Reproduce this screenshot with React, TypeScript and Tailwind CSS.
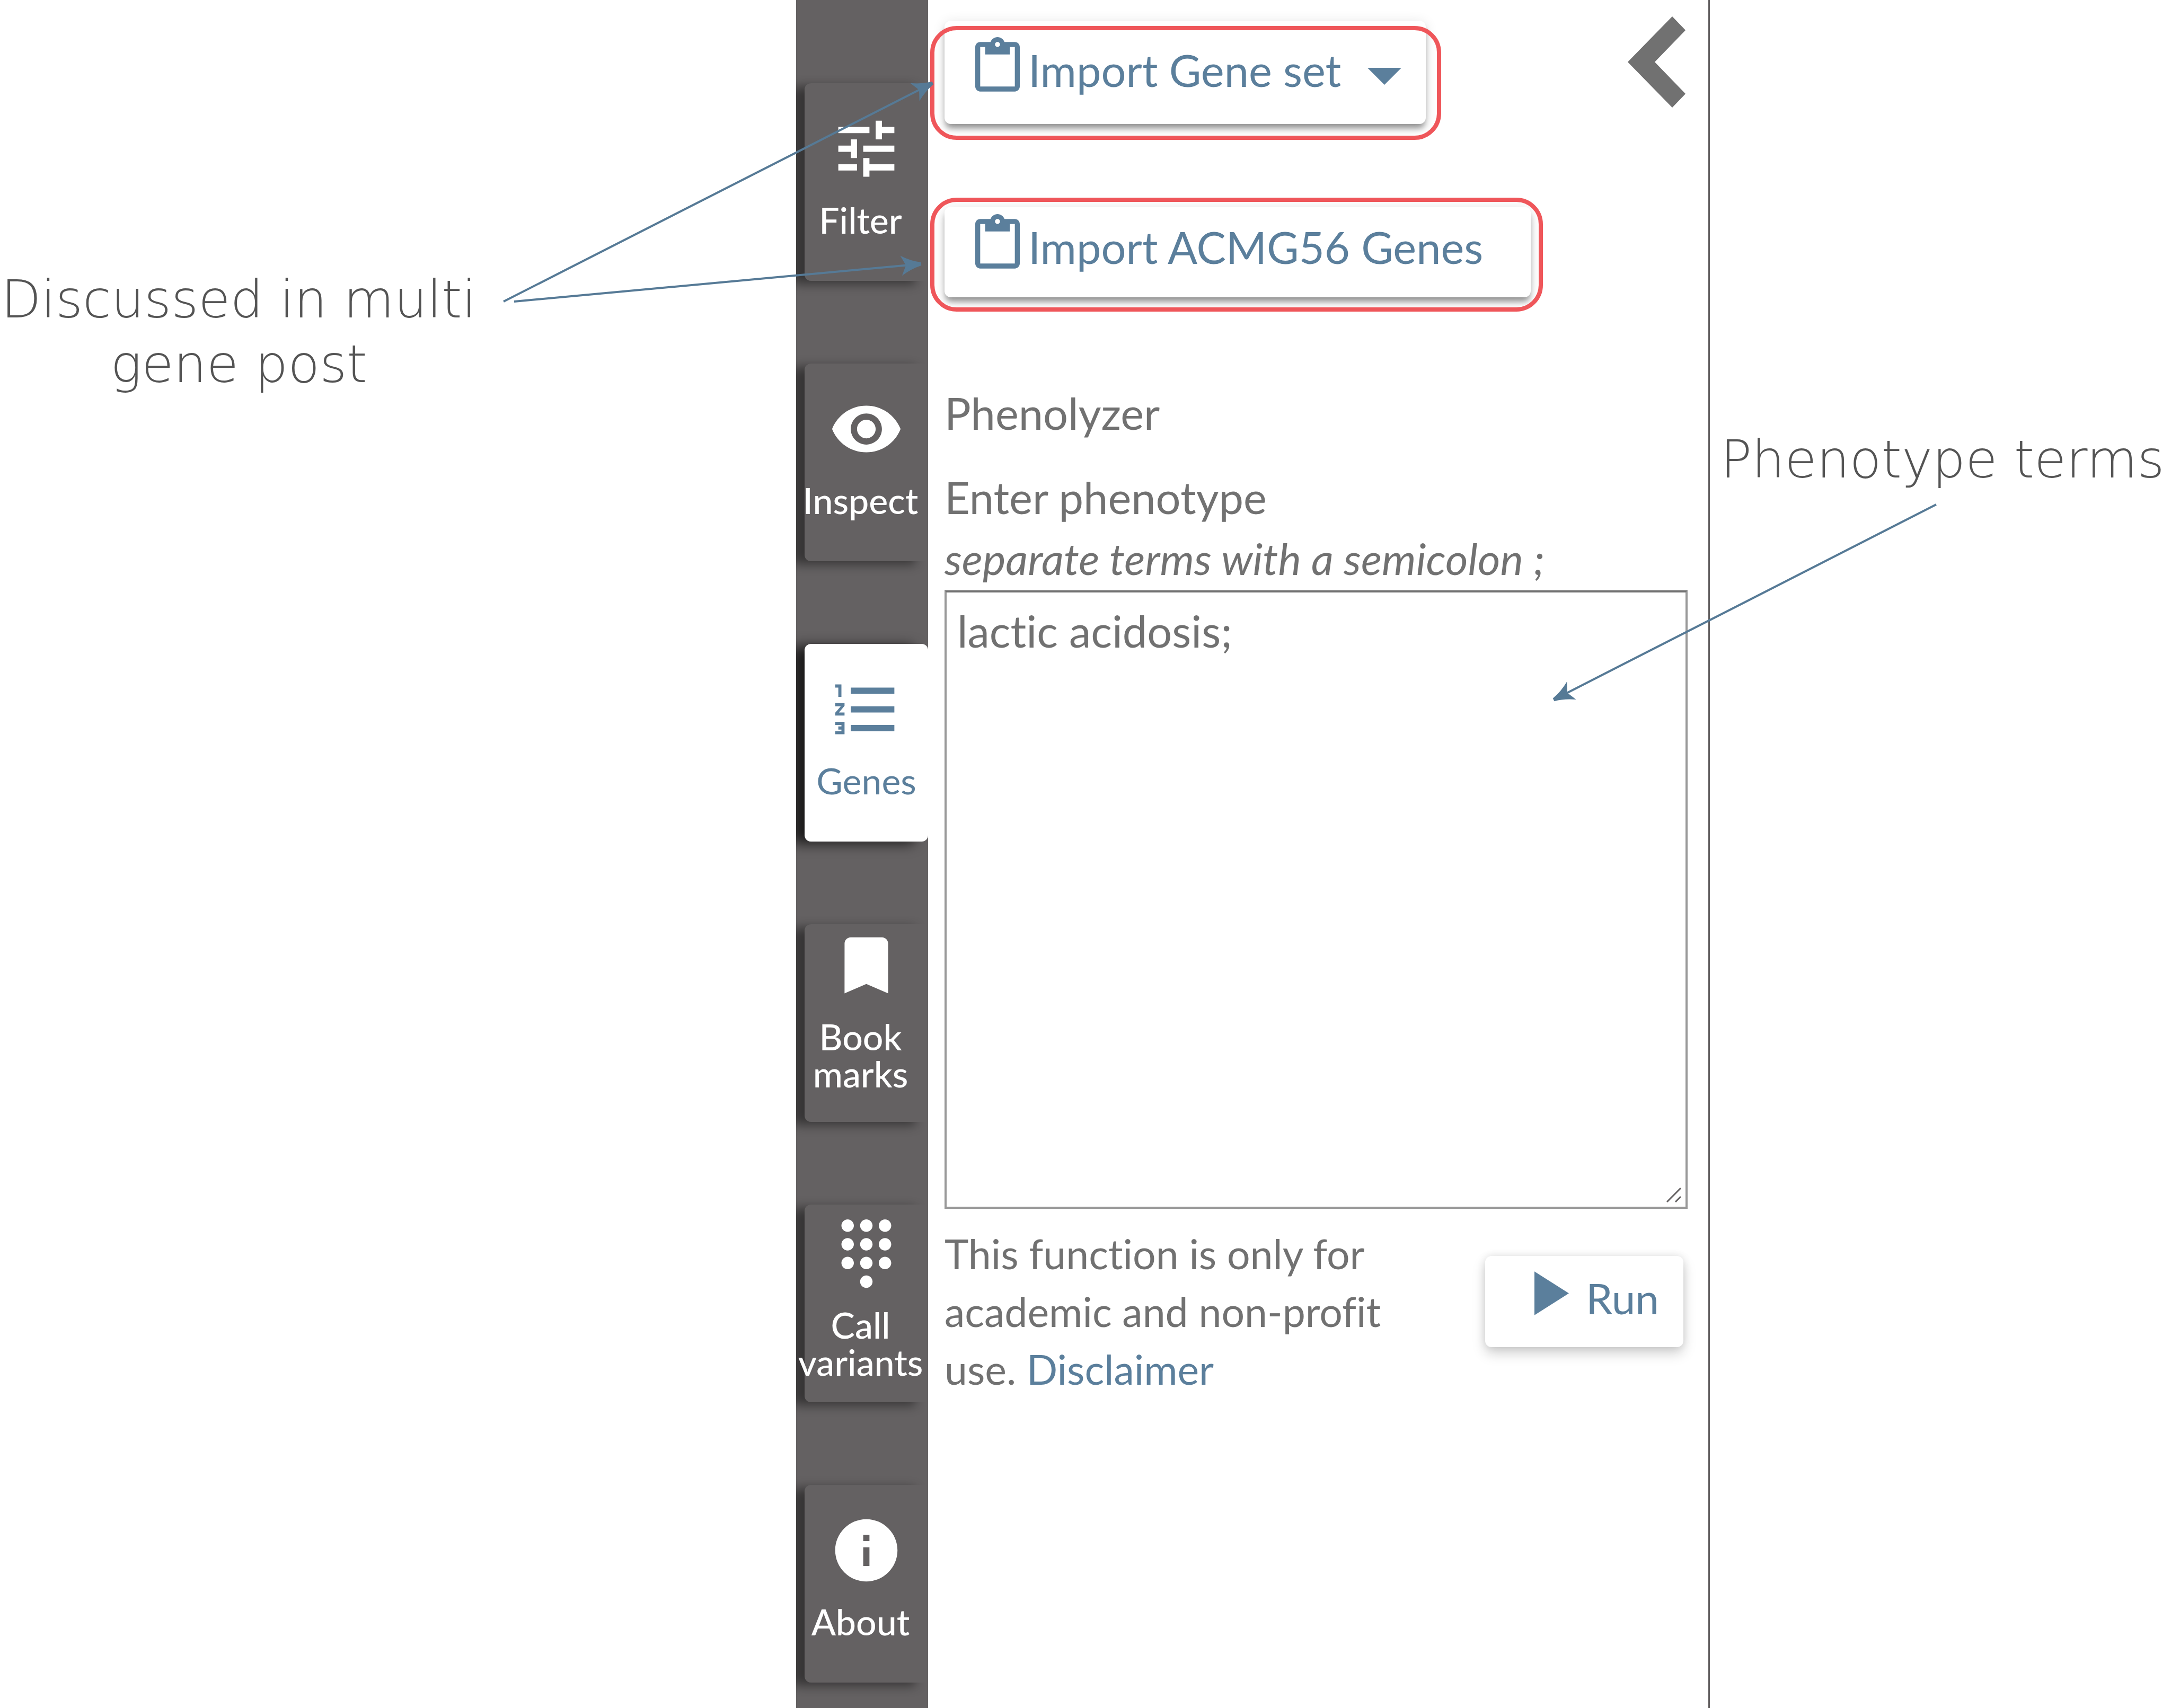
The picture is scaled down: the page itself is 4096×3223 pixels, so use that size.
import React from "react";
import type { IconType } from "react-icons";
import {
  MdBookmark,
  MdContentPaste,
  MdDialpad,
  MdFormatListNumbered,
  MdInfo,
  MdTune,
  MdVisibility,
} from "react-icons/md";

type Tab = { lines: string[]; Icon: IconType; pad: string; active?: boolean };

const tabs: Tab[] = [
  { lines: ["Filter"], Icon: MdTune, pad: "pt-[53px]" },
  { lines: ["Inspect"], Icon: MdVisibility, pad: "pt-[53px]" },
  { lines: ["Genes"], Icon: MdFormatListNumbered, pad: "pt-[53px]", active: true },
  { lines: ["Book", "marks"], Icon: MdBookmark, pad: "pt-[7px]" },
  { lines: ["Call", "variants"], Icon: MdDialpad, pad: "pt-[22px]" },
  { lines: ["About"], Icon: MdInfo, pad: "pt-[53px]" },
];

function SideTab({ lines, Icon, pad, active }: Tab) {
  const look = active
    ? "rounded-xl bg-white text-[#5b7f9c] shadow-[-24px_4px_24px_rgba(0,0,0,0.72)]"
    : "rounded-l-xl bg-[#646162] text-white shadow-[-24px_6px_20px_rgba(0,0,0,0.45)]";
  return (
    <button
      type="button"
      aria-current={active ? "page" : undefined}
      className={`flex h-[373px] w-full shrink-0 flex-col items-center ${pad} ${look}`}
    >
      <Icon className="size-[141px] shrink-0" />
      <span
        className={`mt-[29px] flex flex-col items-center text-[68px] leading-[70px] whitespace-nowrap ${
          active ? "" : "pr-[22px] font-medium"
        }`}
      >
        {lines.map((line) => (
          <span key={line}>{line}</span>
        ))}
      </span>
    </button>
  );
}

function ImportButton({
  label,
  caret,
  className,
}: {
  label: string;
  caret?: boolean;
  className: string;
}) {
  return (
    <button
      type="button"
      className={`flex items-start rounded-xl bg-white pl-11 text-[83px] leading-[100px] whitespace-nowrap text-[#5b7f9c] shadow-[0_10px_12px_-2px_rgba(0,0,0,0.38),0_4px_24px_rgba(0,0,0,0.12)] ${className}`}
    >
      <MdContentPaste className="size-28 shrink-0" />
      <span className="mt-3 ml-[2px]">{label}</span>
      {caret && (
        <svg className="mt-[58px] ml-[50px] h-8 w-16" viewBox="0 0 10 5" aria-hidden="true">
          <path d="M0 0h10L5 5z" fill="currentColor" />
        </svg>
      )}
    </button>
  );
}

function Arrow({ x1, y1, x2, y2 }: { x1: number; y1: number; x2: number; y2: number }) {
  const angle = (Math.atan2(y2 - y1, x2 - x1) * 180) / Math.PI;
  const length = Math.hypot(x2 - x1, y2 - y1);
  return (
    <g transform={`translate(${x2} ${y2}) rotate(${angle})`}>
      <path d={`M${-length} 0H-26`} stroke="#567a96" strokeWidth="4" />
      <path d="M1 -3Q-18 -7 -37 -19L-28 0L-37 19Q-18 7 1 3z" fill="#567a96" />
    </g>
  );
}

export default function App() {
  return (
    <div className="relative grid min-h-screen grid-cols-[1502fr_1724fr_870fr] bg-white font-['Lato',sans-serif] text-[#717171] [font-variant-ligatures:none]">
      <aside className="pt-[504px]">
        <p className="w-[60%] text-center font-['DejaVu_Sans',sans-serif] text-[98px] leading-[122px] font-extralight whitespace-nowrap text-[#545454]">
          Discussed in multi
          <br />
          gene post
        </p>
      </aside>

      <main className="flex border-r-3 border-[#646162]">
        <nav
          aria-label="Tools"
          className="flex w-[249px] shrink-0 flex-col gap-[156px] overflow-hidden bg-[#646162] pt-[157px] pl-4"
        >
          {tabs.map((tab) => (
            <SideTab key={tab.lines[0]} {...tab} />
          ))}
        </nav>

        <section className="flex min-w-0 flex-1 flex-col pt-[31px] pr-[39px] pl-[31px]">
          <div className="flex items-start justify-between">
            <div className="relative mt-2">
              <ImportButton label="Import Gene set" caret className="pt-[31px] pr-[46px] pb-[52px]" />
              <div className="pointer-events-none absolute top-[10px] right-[-29px] bottom-[-30px] left-[-27px] rounded-[50px] border-8 border-[#ef565a]" />
            </div>
            <button type="button" aria-label="Collapse panel" className="mr-1">
              <svg className="h-[172px] w-[109px]" viewBox="0 0 109 172" aria-hidden="true">
                <path d="M0 86L84 0L109 26L51 86L109 146L84 172z" fill="#717171" />
              </svg>
            </button>
          </div>

          <div className="relative mt-[156px] self-start">
            <ImportButton label="Import ACMG56 Genes" className="pt-[14px] pr-[90px] pb-[45px]" />
            <div className="pointer-events-none absolute top-[-17px] right-[-23px] bottom-[-27px] left-[-27px] rounded-[50px] border-8 border-[#ef565a]" />
          </div>

          <h2 className="mt-[168px] text-[83px] leading-[100px]">Phenolyzer</h2>
          <label htmlFor="phenotype" className="mt-[59px] text-[83px] leading-[100px]">
            Enter phenotype
          </label>
          <p id="phenotype-hint" className="mt-[15px] text-[82px] leading-[100px] italic">
            separate terms with a semicolon ;
          </p>
          <div className="relative mt-[11px]">
            <textarea
              id="phenotype"
              aria-describedby="phenotype-hint"
              defaultValue="lactic acidosis;"
              className="block h-[1167px] w-full resize-none border-4 border-[#999] border-t-[#717171] bg-white px-5 pt-[22px] text-[83px] leading-[100px] outline-none [font-variant-ligatures:none]"
            />
            <svg
              className="pointer-events-none absolute right-3 bottom-3 size-7"
              viewBox="0 0 28 28"
              aria-hidden="true"
            >
              <path d="M1 27L27 1M17 27L27 17" stroke="#646162" strokeWidth="3" />
            </svg>
          </div>

          <div className="mt-[30px] flex items-start justify-between">
            <p className="w-[900px] text-[77px] leading-[109px]">
              This function is only for academic and non-profit use.{" "}
              <a href="#disclaimer" className="text-[#5b7f9c]">
                Disclaimer
              </a>
            </p>
            <button
              type="button"
              className="mt-[59px] mr-2 flex h-[172px] items-start rounded-xl bg-white pt-[29px] pr-[46px] pl-[93px] text-[80px] leading-[100px] text-[#5b7f9c] shadow-[0_12px_24px_rgba(0,0,0,0.18),0_0_16px_rgba(0,0,0,0.1)]"
            >
              <svg className="h-[83px] w-[65px]" viewBox="0 0 11 14" aria-hidden="true">
                <path d="M0 0v14l11-7z" fill="currentColor" />
              </svg>
              <span className="ml-8">Run</span>
            </button>
          </div>
        </section>
      </main>

      <aside className="pt-[806px] pl-5">
        <p className="font-['DejaVu_Sans',sans-serif] text-[98px] leading-[122px] font-extralight whitespace-nowrap text-[#545454]">
          Phenotype terms
        </p>
      </aside>

      <svg
        className="pointer-events-none absolute inset-0 h-full w-full"
        viewBox="0 0 4096 3223"
        aria-hidden="true"
      >
        <Arrow x1={950} y1={569} x2={1759} y2={157} />
        <Arrow x1={970} y1={569} x2={1737} y2={498} />
        <Arrow x1={3653} y1={952} x2={2932} y2={1320} />
      </svg>
    </div>
  );
}
